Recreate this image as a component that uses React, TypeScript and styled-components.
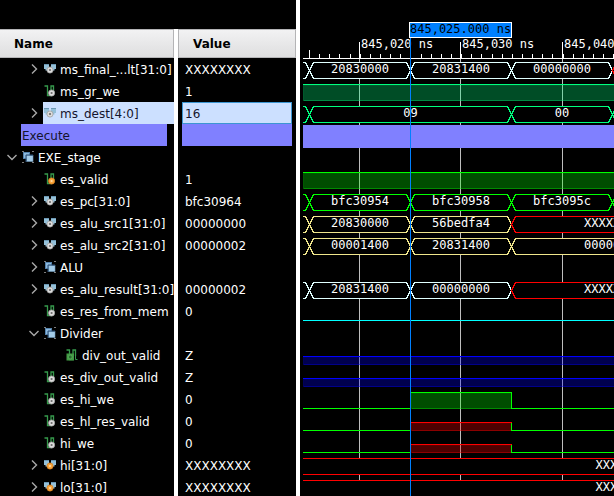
import React from "react";
import styled, { createGlobalStyle } from "styled-components";

const GlobalStyle = createGlobalStyle`
  * { box-sizing: border-box; }
  html, body { margin: 0; background: #000; }
  body { font-family: "DejaVu Sans", sans-serif; font-size: 12px; overflow: hidden; }
`;

const ROW = 22;
const HEAD = 58;

type IconKind = "bus" | "busReg" | "wire" | "wireReg" | "wireOut" | "group";
type Cell = { from: number; to: number; text: string; color?: string };
type Wave =
  | { type: "bus"; color: string; cells: Cell[] }
  | { type: "high"; color: string; half?: boolean }
  | { type: "low"; color: string }
  | { type: "pulse"; color: string; half?: boolean }
  | { type: "unknown"; label: string }
  | { type: "divider" }
  | { type: "none" };
type Signal = {
  name: string;
  value: string;
  level: number;
  icon?: IconKind;
  toggle?: "open" | "closed";
  selected?: boolean;
  divider?: boolean;
  wave: Wave;
};

const START = 302;
const T0 = 309;
const T1 = 410;
const T2 = 511;
const T3 = 612;
const T4 = 714;
const FAR = 4000;

const three = (a: string, b: string, c: string): Cell[] => [
  { from: T0, to: T1, text: a },
  { from: T1, to: T2, text: b },
  { from: T2, to: T3, text: c },
];
const lastLong = (a: string, b: string, c: string, color?: string): Cell[] => [
  { from: T0, to: T1, text: a },
  { from: T1, to: T2, text: b },
  { from: T2, to: T4, text: c, color },
];

const signals: Signal[] = [
  { name: "ms_final_...lt[31:0]", value: "XXXXXXXX", level: 1, icon: "bus", toggle: "closed",
    wave: { type: "bus", color: "#e0ffff", cells: [...three("20830000", "20831400", "00000000"), { from: T3, to: T4, text: "", color: "#ff0000" }] } },
  { name: "ms_gr_we", value: "1", level: 1, icon: "wire", wave: { type: "high", color: "#00ff7f" } },
  { name: "ms_dest[4:0]", value: "16", level: 1, icon: "bus", toggle: "closed", selected: true,
    wave: { type: "bus", color: "#00ff7f", cells: [{ from: T0, to: T2, text: "09" }, { from: T2, to: T3, text: "00" }, { from: T3, to: T4, text: "" }] } },
  { name: "Execute", value: "", level: 0, divider: true, wave: { type: "divider" } },
  { name: "EXE_stage", value: "", level: 0, icon: "group", toggle: "open", wave: { type: "none" } },
  { name: "es_valid", value: "1", level: 1, icon: "wireReg", wave: { type: "high", color: "#00ff00" } },
  { name: "es_pc[31:0]", value: "bfc30964", level: 1, icon: "bus", toggle: "closed",
    wave: { type: "bus", color: "#00ff00", cells: [...three("bfc30954", "bfc30958", "bfc3095c"), { from: T3, to: T4, text: "" }] } },
  { name: "es_alu_src1[31:0]", value: "00000000", level: 1, icon: "bus", toggle: "closed",
    wave: { type: "bus", color: "#f0e68c", cells: lastLong("20830000", "56bedfa4", "XXXXXXXX", "#ff0000") } },
  { name: "es_alu_src2[31:0]", value: "00000002", level: 1, icon: "bus", toggle: "closed",
    wave: { type: "bus", color: "#f0e68c", cells: lastLong("00001400", "20831400", "00000000") } },
  { name: "ALU", value: "", level: 1, icon: "group", toggle: "closed", wave: { type: "none" } },
  { name: "es_alu_result[31:0]", value: "00000002", level: 1, icon: "bus", toggle: "closed",
    wave: { type: "bus", color: "#e0ffff", cells: lastLong("20831400", "00000000", "XXXXXXXX", "#ff0000") } },
  { name: "es_res_from_mem", value: "0", level: 1, icon: "wire", wave: { type: "low", color: "#00ffff" } },
  { name: "Divider", value: "", level: 1, icon: "group", toggle: "open", wave: { type: "none" } },
  { name: "div_out_valid", value: "Z", level: 2, icon: "wireOut", wave: { type: "high", color: "#0000ff", half: true } },
  { name: "es_div_out_valid", value: "Z", level: 1, icon: "wire", wave: { type: "high", color: "#0000ff", half: true } },
  { name: "es_hi_we", value: "0", level: 1, icon: "wire", wave: { type: "pulse", color: "#00ff00" } },
  { name: "es_hl_res_valid", value: "0", level: 1, icon: "wire", wave: { type: "pulse", color: "#ff0000", half: true } },
  { name: "hi_we", value: "0", level: 1, icon: "wire", wave: { type: "pulse", color: "#ff0000", half: true } },
  { name: "hi[31:0]", value: "XXXXXXXX", level: 1, icon: "busReg", toggle: "closed", wave: { type: "unknown", label: "XXXXXXXX" } },
  { name: "lo[31:0]", value: "XXXXXXXX", level: 1, icon: "busReg", toggle: "closed", wave: { type: "unknown", label: "XXXXXXXX" } },
];

const Window = styled.main`
  display: grid;
  grid-template-columns: 174px 4px 118px 4px minmax(0, 1fr);
  height: 100vh;
  overflow: hidden;
  background: #000;
  color: #fff;
`;

const Panel = styled.section`
  min-width: 0;
  padding-top: 29px;
  overflow: hidden;
`;

const Splitter = styled.div<{ $top: number }>`
  margin-top: ${(p) => p.$top}px;
  background: #fff;
`;

const Header = styled.h2<{ $edge?: boolean }>`
  display: flex;
  align-items: center;
  height: 29px;
  margin: 0;
  padding: 0 14px;
  border: 1px solid #b4b4b6;
  border-left-width: ${(p) => (p.$edge ? 0 : 1)}px;
  background: linear-gradient(#f2f2f3, #dededf);
  color: #000;
  font-size: 12px;
  font-weight: bold;
`;

const List = styled.ul`
  margin: 0;
  padding: 0;
  list-style: none;
`;

const NameRow = styled.li<{ $level: number }>`
  display: flex;
  align-items: center;
  height: ${ROW}px;
  padding-left: ${(p) => p.$level * 22 + 5}px;
  white-space: nowrap;
`;

const DividerRow = styled.li`
  height: ${ROW}px;
  margin: 0 7px 0 21px;
  padding-left: 1px;
  background: #8080ff;
  color: #14142c;
  line-height: 24px;
`;

const Toggle = styled.button`
  display: flex;
  flex: none;
  align-items: center;
  justify-content: center;
  width: 14px;
  height: ${ROW}px;
  margin-right: 2px;
  padding: 0;
  border: 0;
  background: none;
  color: #a8a8a8;
`;

const ToggleSpace = styled.span`
  flex: none;
  width: 16px;
`;

const NameCell = styled.span<{ $selected?: boolean }>`
  display: flex;
  flex: 1 0 auto;
  align-items: center;
  gap: 4px;
  height: ${ROW}px;
  padding-left: 1px;
  line-height: 24px;
  background: ${(p) => (p.$selected ? "#cce0ff" : "transparent")};
  color: ${(p) => (p.$selected ? "#14142c" : "#fff")};
`;

const NameText = styled.span`
  padding-top: 2px;
`;

const IconSvg = styled.svg`
  flex: none;
  display: block;
`;

const ValueList = styled(List)`
  padding: 0 4px;
`;

const ValueRow = styled.li<{ $selected?: boolean; $divider?: boolean }>`
  height: ${ROW}px;
  padding-left: 2px;
  border: 1px solid ${(p) => (p.$selected ? "#3c96d2" : p.$divider ? "#8080ff" : "transparent")};
  background: ${(p) => (p.$selected ? "#cce0ff" : p.$divider ? "#8080ff" : "transparent")};
  color: ${(p) => (p.$selected ? "#14142c" : "#fff")};
  line-height: 22px;
`;

const WavePanel = styled.section`
  min-width: 0;
  overflow: hidden;
`;

const WaveSvg = styled.svg`
  display: block;
  width: 100%;
  font-family: "DejaVu Sans Mono", monospace;
  font-size: 12px;
`;

function Chevron({ open }: { open: boolean }) {
  return (
    <IconSvg width="12" height="12" viewBox="0 0 12 12" fill="none" stroke="currentColor" strokeWidth="1.4">
      <path d={open ? "M1.500 4l4.500 4.500L10.500 4" : "M4 1.500l4.500 4.500L4 10.500"} />
    </IconSvg>
  );
}

function Knob({ x, y, reg }: { x: number; y: number; reg?: boolean }) {
  return (
    <g>
      <circle cx={x} cy={y} r="3.1" fill={reg ? "#f8a43c" : "#dcdcdc"} stroke={reg ? "#d8801c" : "#a0a0a0"} strokeWidth="0.8" />
      <circle cx={x} cy={y} r="1.1" fill={reg ? "#ffdca8" : "#6c6c6c"} />
    </g>
  );
}

function SignalIcon({ kind }: { kind: IconKind }) {
  return (
    <IconSvg width="12" height="12" viewBox="0 0 12 12" aria-hidden="true">
      {(kind === "bus" || kind === "busReg") && (
        <>
          <path d="M0 1h5v4L3.500 7.500H1.500V6H0zM7 1h5v5h-1.500v1.500h-2L7 5z" fill="#94c0d8" />
          <path d="M0 1.500h5M7 1.500h5" stroke="#6c98b4" strokeWidth="1" />
          <Knob x={6} y={7} reg={kind === "busReg"} />
        </>
      )}
      {(kind === "wire" || kind === "wireReg" || kind === "wireOut") && (
        <>
          <path d="M0.500 1H3.500V10.500H7V1H9.500V7" fill="none" stroke="#369a4c" strokeWidth="1.3" />
          {kind === "wireOut" ? (
            <>
              <rect x="0.500" y="4.500" width="7.500" height="7" fill="#429a44" />
              <circle cx="4.200" cy="8" r="2" fill="#2a7030" stroke="#5cb060" strokeWidth="0.8" />
              <path d="M9.500 6v4.500H11.500" fill="none" stroke="#369a4c" />
            </>
          ) : (
            <Knob x={7.6} y={8} reg={kind === "wireReg"} />
          )}
        </>
      )}
      {kind === "group" && (
        <>
          <path d="M0 0h2v1H0zM10 0h2v1h-2zM0 11h2v1H0zM10 11h2v1h-2z" fill="#7c7c7c" />
          <rect x="1.500" y="1.500" width="6" height="6" fill="#8cb8dc" stroke="#5482ac" />
          <rect x="4.500" y="4.500" width="6.500" height="6" fill="#a4cce8" stroke="#7098b8" strokeWidth="0.6" />
          <path d="M4 11V4h7" fill="none" stroke="#284c74" />
        </>
      )}
    </IconSvg>
  );
}

function BusWave({ y, color, cells }: { y: number; color: string; cells: Cell[] }) {
  const top = y + 4;
  const bottom = y + 20;
  const mid = y + 12;
  const first = cells[0];
  return (
    <g>
      <rect x={START} y={top} width={FAR} height={16} fill="#000" />
      <path
        d={`M${START} ${top}H${first.from - 4}L${first.from} ${mid}L${first.from - 4} ${bottom}H${START}`}
        fill="none"
        stroke={color}
      />
      {cells.map((c) => (
        <g key={c.from}>
          <path
            d={`M${c.from} ${mid}L${c.from + 4} ${top}H${c.to - 4}L${c.to} ${mid}L${c.to - 4} ${bottom}H${c.from + 4}Z`}
            fill="none"
            stroke={c.color ?? color}
          />
          <text x={(c.from + c.to) / 2} y={y + 14} textAnchor="middle" fill="#fff">
            {c.text}
          </text>
        </g>
      ))}
    </g>
  );
}

type BandProps = { from: number; to: number; top: number; bottom: number; color: string };

function Band({ from, to, top, bottom, color }: BandProps) {
  return (
    <g>
      <rect
        x={from + 1}
        y={top + 1}
        width={to - from - 1}
        height={bottom - top - 1}
        fill={color}
        fillOpacity="0.3"
        stroke={color}
        strokeOpacity="0.35"
      />
      <path d={`M${from} ${top}H${to}`} stroke={color} />
    </g>
  );
}

function SignalWave({ wave, y }: { wave: Wave; y: number }) {
  const low = y + 20;
  switch (wave.type) {
    case "bus":
      return <BusWave y={y} color={wave.color} cells={wave.cells} />;
    case "high":
      return <Band from={START} to={FAR} top={wave.half ? y + 12 : y + 4} bottom={low} color={wave.color} />;
    case "low":
      return <path d={`M${START} ${low}H${FAR}`} stroke={wave.color} />;
    case "pulse": {
      const high = wave.half ? y + 12 : y + 4;
      return (
        <g>
          <Band from={T1} to={T2} top={high} bottom={low} color={wave.color} />
          <path d={`M${START} ${low}H${T1}M${T2} ${high}V${low}H${FAR}`} fill="none" stroke="#00ff00" />
        </g>
      );
    }
    case "unknown":
      return (
        <g>
          <rect x={START} y={y + 4} width={FAR} height={16} fill="#000" />
          <path d={`M${START} ${y + 4}H${FAR}M${START} ${low}H${FAR}`} stroke="#ff0000" />
          <text x={624} y={y + 14} textAnchor="middle" fill="#fff">{wave.label}</text>
        </g>
      );
    case "divider":
      return <rect x={START} y={y} width={FAR} height={23} fill="#8080ff" />;
    default:
      return null;
  }
}

const majors = [
  { x: 359, label: "845,020 ns" },
  { x: 460, label: "845,030 ns" },
  { x: 562, label: "845,040 ns" },
];
const ticks = Array.from({ length: 80 }, (_, i) => ({
  x: Math.round(T0 + i * 10.14),
  top: i === 0 ? 50 : 54,
}));

function Waveforms() {
  const height = HEAD + signals.length * ROW;
  return (
    <WaveSvg height={height} role="img" aria-label="Waveforms" shapeRendering="crispEdges">
      <g transform="translate(-300 0)">
        {majors.map((m) => (
          <g key={m.x}>
            <rect x={m.x} y={HEAD} width="1" height={height} fill="#bebebe" />
            <rect x={m.x} y={42} width="1" height={16} fill="#fff" />
            <text x={m.x + 2} y={48} fill="#fff">{m.label}</text>
          </g>
        ))}
        {ticks.map((t) => (
          <rect key={t.x} x={t.x} y={t.top} width="1" height={HEAD - t.top} fill="#fff" />
        ))}
        <rect x={303} y={HEAD} width={FAR} height="1" fill="#fff" />
      </g>
      <g transform="translate(-299.5 0.5)">
        {signals.map((s, i) => (
          <SignalWave key={s.name} wave={s.wave} y={HEAD + i * ROW} />
        ))}
      </g>
      <g transform="translate(-300 0)">
        <rect x={T1} y={38} width="1" height={height} fill="#0080ff" />
        <rect x={409} y={22} width={103} height={16} fill="#fff" />
        <rect x={410} y={23} width={101} height={14} fill="#0080ff" />
        <text x={410} y={33} fill="#000">845,025.000 ns</text>
      </g>
    </WaveSvg>
  );
}

export default function App() {
  return (
    <>
      <GlobalStyle />
      <Window>
        <Panel aria-label="Signal names">
          <Header $edge>Name</Header>
          <List>
            {signals.map((s) =>
              s.divider ? (
                <DividerRow key={s.name}>{s.name}</DividerRow>
              ) : (
                <NameRow key={s.name} $level={s.level}>
                  {s.toggle ? (
                    <Toggle type="button" aria-label={s.name} aria-expanded={s.toggle === "open"}>
                      <Chevron open={s.toggle === "open"} />
                    </Toggle>
                  ) : (
                    <ToggleSpace />
                  )}
                  <NameCell $selected={s.selected}>
                    {s.icon && <SignalIcon kind={s.icon} />}
                    <NameText>{s.name}</NameText>
                  </NameCell>
                </NameRow>
              )
            )}
          </List>
        </Panel>
        <Splitter $top={29} />
        <Panel aria-label="Signal values">
          <Header>Value</Header>
          <ValueList>
            {signals.map((s) => (
              <ValueRow key={s.name} $selected={s.selected} $divider={s.divider}>
                {s.value}
              </ValueRow>
            ))}
          </ValueList>
        </Panel>
        <Splitter $top={0} />
        <WavePanel>
          <Waveforms />
        </WavePanel>
      </Window>
    </>
  );
}
